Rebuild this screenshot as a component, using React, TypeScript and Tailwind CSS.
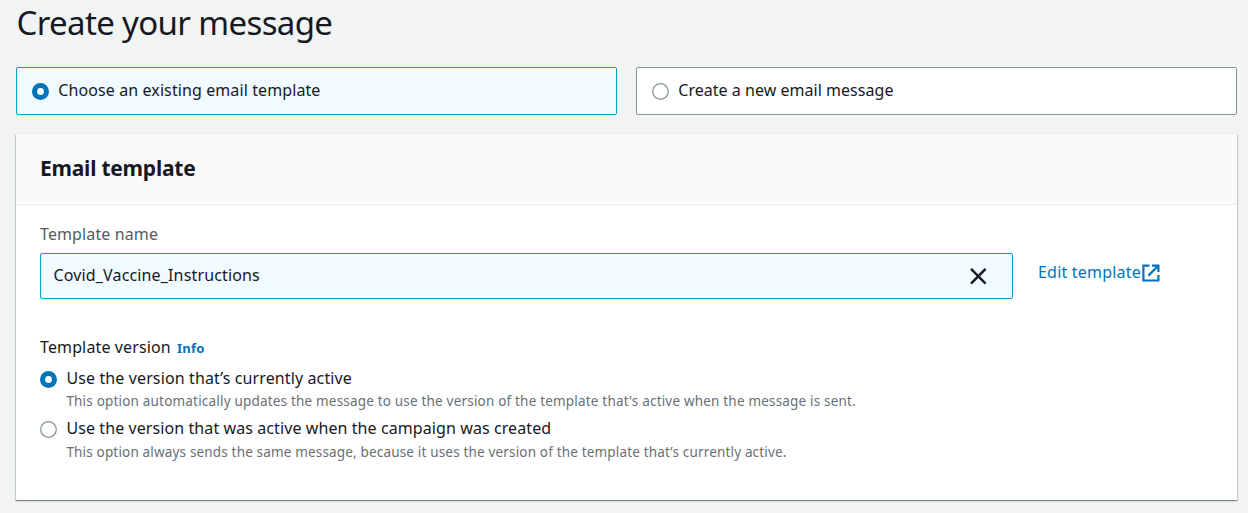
import { useState } from "react";

function Radio({ on }: { on: boolean }) {
  return (
    <svg width="17" height="17" viewBox="0 0 17 17" className="block shrink-0">
      {on ? (
        <>
          <circle cx="8.5" cy="8.5" r="8.5" fill="#0073bb" />
          <circle cx="8.5" cy="8.5" r="3.4" fill="#fff" />
        </>
      ) : (
        <circle cx="8.5" cy="8.5" r="7.8" fill="#fff" stroke="#879596" strokeWidth="1.3" />
      )}
    </svg>
  );
}

function Tile({ on, label, onSelect, spacing }: { on: boolean; label: string; onSelect: () => void; spacing: string }) {
  return (
    <button
      type="button"
      role="radio"
      aria-checked={on}
      onClick={onSelect}
      className={`flex h-12 w-[601px] items-center rounded-xs border pl-[14.5px] text-left ${
        on ? "border-[#00a1c9] bg-[#f1faff]" : "border-[#879596] bg-white"
      }`}
    >
      <span className="pt-px"><Radio on={on} /></span>
      <span className={`-mt-0.5 ml-[9.8px] leading-6 ${spacing}`}>{label}</span>
    </button>
  );
}

function Option({
  on,
  label,
  hint,
  onSelect,
  labelClass,
  hintClass,
}: {
  on: boolean;
  label: string;
  hint: string;
  onSelect: () => void;
  labelClass: string;
  hintClass: string;
}) {
  return (
    <button type="button" role="radio" aria-checked={on} onClick={onSelect} className="flex text-left">
      <span className="pt-[5px]"><Radio on={on} /></span>
      <span className="ml-[9.4px] flex flex-col whitespace-nowrap">
        <span className={`leading-6 ${labelClass}`}>{label}</span>
        <span className={`text-[13.5px] leading-[22px] text-[#687078] ${hintClass}`}>{hint}</span>
      </span>
    </button>
  );
}

export default function App() {
  const [source, setSource] = useState("existing");
  const [version, setVersion] = useState("active");

  return (
    <div className="h-[513px] overflow-hidden bg-[#f2f3f3] pl-4 font-['Noto_Sans',sans-serif] text-base text-[#16191f]">
      <h1 className="h-[67px] pt-[3px] pl-[0.5px] text-[33px] leading-10 tracking-[-0.64px] whitespace-nowrap">Create your message</h1>

      <div role="radiogroup" className="flex gap-[19px]">
        <Tile
          on={source === "existing"}
          label="Choose an existing email template"
          onSelect={() => setSource("existing")}
          spacing="tracking-[0.1px]"
        />
        <Tile
          on={source === "new"}
          label="Create a new email message"
          onSelect={() => setSource("new")}
          spacing="tracking-[0.03px]"
        />
      </div>

      <section className="mt-[19px] h-[366px] w-[1221px] bg-white shadow-[0_1px_1px_0_rgba(0,28,36,0.3),1px_1px_1px_0_rgba(0,28,36,0.15),-1px_1px_1px_0_rgba(0,28,36,0.15),0_-1px_0_0_#eaeded]">
        <header className="h-[71px] border-b border-[#eaeded] bg-[#fafafa] pt-5 pl-6">
          <h2 className="text-[21px] leading-7 font-bold tracking-[-0.23px]">Email template</h2>
        </header>

        <div className="pt-[17px] pl-6">
          <label className="block leading-6 tracking-[0.12px] text-[#545b64]">Template name</label>
          <div className="mt-[7px] flex">
            <div className="flex h-[46px] w-[973px] items-center justify-between rounded-xs border border-[#00a1c9] bg-[#f1faff] pr-[25px] pl-[12.5px]">
              <span className="-mt-0.5 leading-6 tracking-[0.15px]">Covid_Vaccine_Instructions</span>
              <button type="button" aria-label="Clear">
                <svg width="17" height="17" viewBox="0 0 17 17" fill="none" stroke="#16191f" strokeWidth="2.4" className="block">
                  <path d="M1 .8 15.6 15.6M15.6 .8 1 15.6" />
                </svg>
              </button>
            </div>
            <a href="#" className="mt-[7px] ml-[25px] flex h-6 items-center self-start text-[#0073bb]">
              <span className="tracking-[0.2px]">Edit template</span>
              <svg width="18" height="18" viewBox="0 0 18 18" fill="none" stroke="currentColor" strokeWidth="2.2" className="mt-0.5 ml-[0.8px]">
                <path d="M7.5 1.6H1.4V16.5H16.4V11" />
                <path d="M10 1.6H16.4V8M16.2 1.8 6.4 11.6" />
              </svg>
            </a>
          </div>

          <div className="mt-9 flex items-baseline leading-6">
            <span className="tracking-[0.13px]">Template version</span>
            <a href="#" className="ml-1.5 text-[13px] font-bold tracking-[0.3px] text-[#0073bb]">Info</a>
          </div>

          <div role="radiogroup" className="mt-1.5 flex flex-col gap-1">
            <Option
              on={version === "active"}
              label="Use the version that’s currently active"
              hint="This option automatically updates the message to use the version of the template that's active when the message is sent."
              onSelect={() => setVersion("active")}
              labelClass="tracking-[0.12px]"
              hintClass="tracking-[0.19px]"
            />
            <Option
              on={version === "created"}
              label="Use the version that was active when the campaign was created"
              hint="This option always sends the same message, because it uses the version of the template that’s currently active."
              onSelect={() => setVersion("created")}
              labelClass="tracking-[0.09px]"
              hintClass="pt-px tracking-[0.17px]"
            />
          </div>
        </div>
      </section>
    </div>
  );
}
